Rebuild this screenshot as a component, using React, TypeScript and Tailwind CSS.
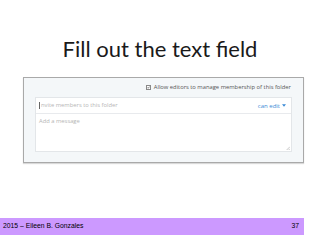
export default function App() {
  return (
    <div className="w-[320px] h-[240px] bg-white flex flex-col overflow-hidden">
      <div className="h-[77px] flex items-start justify-center pt-[38px]">
        <h1 className="text-[22px] leading-[22px] font-normal text-[#1a1a1a]" style={{ fontFamily: 'Lato, "DejaVu Sans", sans-serif' }}>
          Fill out the text field
        </h1>
      </div>

      <div className="ml-[23px] w-[281px] h-[86px] border border-[#a9a9a9] bg-[#f4f7f9] shadow-[0_1px_1px_rgba(0,0,0,0.15)] flex flex-col px-[11px] leading-none" style={{ fontFamily: '"Open Sans", sans-serif' }}>
        <div className="h-[19px] flex items-center justify-end gap-[3px] pr-[1px]">
          <span className="w-[5px] h-[5px] border border-[#888] bg-white flex items-center justify-center">
            <svg viewBox="0 0 10 10" className="w-[5px] h-[5px]">
              <path d="M2 5 L4 7.5 L8.5 2" fill="none" stroke="#333" strokeWidth="2" />
            </svg>
          </span>
          <span className="text-[5.8px] text-[#555] whitespace-nowrap">Allow editors to manage membership of this folder</span>
        </div>
        <div className="bg-white border border-[#e3e6e9] flex flex-col">
          <div className="h-[16px] flex items-center justify-between px-[3px] border-b border-[#e8eaed]">
            <div className="flex items-center">
              <span className="w-px h-[7px] bg-[#666] mr-[1px]" />
              <span className="text-[5.8px] text-[#b5b5b5]">nvite members to this folder</span>
            </div>
            <span className="text-[6px] text-[#3a8ad6] flex items-center gap-[2px] pr-[2px]">
              can edit
              <svg viewBox="0 0 10 6" className="w-[4px] h-[3px]">
                <path d="M0 0 L10 0 L5 6 Z" fill="#3a8ad6" />
              </svg>
            </span>
          </div>
          <div className="h-[37px] relative px-[3px] pt-[5px]">
            <div className="text-[5.8px] leading-none text-[#b5b5b5]">Add a message</div>
            <svg viewBox="0 0 6 6" className="absolute right-[1px] bottom-[1px] w-[4px] h-[4px]">
              <path d="M6 1 L1 6 M6 4 L4 6" stroke="#999" strokeWidth="0.8" />
            </svg>
          </div>
        </div>
      </div>

      <div className="h-[55px]" />

      <div className="w-[304px] h-[17px] bg-[#cc99ff] flex items-center justify-between pl-[3px] pr-[5px] text-[6.8px] text-black" style={{ fontFamily: '"Liberation Sans", Arial, sans-serif' }}>
        <span>2015 – Eileen B. Gonzales</span>
        <span>37</span>
      </div>
    </div>
  );
}
